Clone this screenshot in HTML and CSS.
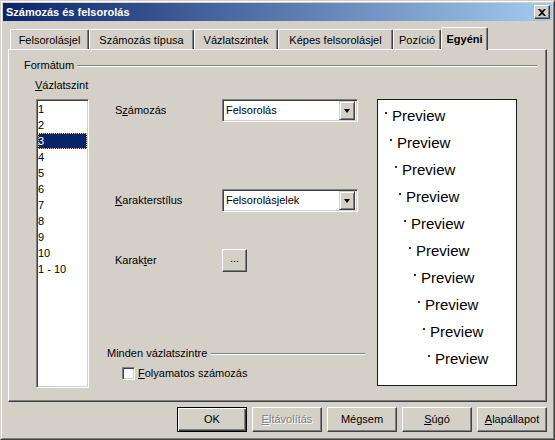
FILE: index.html
```html
<!DOCTYPE html>
<html lang="hu">
<head>
<meta charset="utf-8">
<title>Számozás és felsorolás</title>
<link rel="stylesheet" href="styles.css">
</head>
<body>
<div class="window">
  <div class="window-inner">
    <div class="titlebar">
      <span class="title">Számozás és felsorolás</span>
      <span class="close-btn"><svg width="8" height="7" viewBox="0 0 8 7"><path d="M0 0h2l2 2 2-2h2L5 3.5 8 7H6L4 5 2 7H0l3-3.5z" fill="#000"/></svg></span>
    </div>
    <div class="tabs">
      <div class="tab t1">Felsorolásjel</div>
      <div class="tab t2">Számozás típusa</div>
      <div class="tab t3">Vázlatszintek</div>
      <div class="tab t4">Képes felsorolásjel</div>
      <div class="tab t5">Pozíció</div>
      <div class="tab t6 active">Egyéni</div>
    </div>
    <div class="panel">
      <div class="group-head">
        <span>Formátum</span>
        <span class="etch"></span>
      </div>
      <div class="body">
        <div class="col-left">
          <div class="label"><u>V</u>ázlatszint</div>
          <div class="listbox">
            <div class="row">1</div>
            <div class="row">2</div>
            <div class="row selected">3</div>
            <div class="row">4</div>
            <div class="row">5</div>
            <div class="row">6</div>
            <div class="row">7</div>
            <div class="row">8</div>
            <div class="row">9</div>
            <div class="row">10</div>
            <div class="row">1 - 10</div>
          </div>
        </div>
        <div class="col-mid">
          <div class="field f1">
            <span class="flabel">S<u>z</u>ámozás</span>
            <div class="combo"><span class="ctext">Felsorolás</span><span class="dropbtn"><span class="arrow"></span></span></div>
          </div>
          <div class="field f2">
            <span class="flabel"><u>K</u>arakterstílus</span>
            <div class="combo"><span class="ctext">Felsorolásjelek</span><span class="dropbtn"><span class="arrow"></span></span></div>
          </div>
          <div class="field f3">
            <span class="flabel">Karak<u>t</u>er</span>
            <div class="smallbtn">...</div>
          </div>
          <div class="subhead">
            <span>Minden vázlatszintre</span>
            <span class="etch"></span>
          </div>
          <div class="checkrow">
            <span class="checkbox"></span>
            <span><u>F</u>olyamatos számozás</span>
          </div>
        </div>
        <div class="preview">
          <div class="prow"><span class="bullet"></span>Preview</div>
          <div class="prow"><span class="bullet"></span>Preview</div>
          <div class="prow"><span class="bullet"></span>Preview</div>
          <div class="prow"><span class="bullet"></span>Preview</div>
          <div class="prow"><span class="bullet"></span>Preview</div>
          <div class="prow"><span class="bullet"></span>Preview</div>
          <div class="prow"><span class="bullet"></span>Preview</div>
          <div class="prow"><span class="bullet"></span>Preview</div>
          <div class="prow"><span class="bullet"></span>Preview</div>
          <div class="prow"><span class="bullet"></span>Preview</div>
        </div>
      </div>
    </div>
    <div class="buttons">
      <div class="btn default">OK</div>
      <div class="btn disabled"><u>E</u>ltávolítás</div>
      <div class="btn">Mégsem</div>
      <div class="btn"><u>S</u>úgó</div>
      <div class="btn"><u>A</u>lapállapot</div>
    </div>
  </div>
</div>
</body>
</html>
```

FILE: styles.css
```css
* { box-sizing: border-box; }
html, body { margin: 0; padding: 0; background: #D4D0C8; }
body {
  font-family: "Liberation Sans", Arial, sans-serif;
  font-size: 11px;
  line-height: 13px;
  color: #000;
}
u { text-decoration: underline; text-underline-offset: 1px; }

.window {
  width: 555px;
  height: 440px;
  border: 1px solid;
  border-color: #D4D0C8 #404040 #404040 #D4D0C8;
  background: #D4D0C8;
}
.window-inner {
  height: 100%;
  border: 1px solid;
  border-color: #fff #808080 #808080 #fff;
  padding: 1px;
  display: flex;
  flex-direction: column;
}

.titlebar {
  height: 18px;
  background: linear-gradient(to right, #0A246A, #A6CAF0);
  display: flex;
  align-items: center;
  padding-left: 3px;
  padding-right: 2px;
}
.title {
  color: #fff;
  font-weight: bold;
  font-size: 11px;
  flex: 1;
}
.close-btn {
  width: 16px;
  height: 14px;
  background: #D4D0C8;
  border: 1px solid;
  border-color: #fff #404040 #404040 #fff;
  box-shadow: inset -1px -1px #808080;
  display: flex;
  align-items: center;
  justify-content: center;
  padding-right: 1px;
}

.tabs {
  display: flex;
  align-items: flex-end;
  margin-top: 6px;
  padding-left: 7px;
  height: 22px;
  position: relative;
  z-index: 1;
}
.tab {
  height: 20px;
  border-top: 1px solid #fff;
  border-left: 1px solid #fff;
  border-right: 1px solid #404040;
  box-shadow: inset -1px 0 #808080;
  border-radius: 2px 2px 0 0;
  text-align: center;
  padding-top: 4px;
  white-space: nowrap;
}
.t1 { width: 79px; }
.t2 { width: 105px; }
.t3 { width: 84px; }
.t4 { width: 115px; }
.t5 { width: 48px; }
.t6 { width: 47px; }
.tab.active {
  height: 23px;
  margin-bottom: -1px;
  padding-top: 5px;
  font-weight: bold;
  background: #D4D0C8;
}

.panel {
  margin: 0 5px;
  height: 353px;
  border: 1px solid;
  border-color: #fff #404040 #404040 #fff;
  box-shadow: inset -1px -1px #808080;
  padding: 9px 9px 0 15px;
}

.group-head {
  display: flex;
  align-items: center;
  height: 13px;
}
.etch {
  flex: 1;
  height: 2px;
  border-top: 1px solid #808080;
  border-bottom: 1px solid #fff;
  margin-left: 3px;
  margin-top: 1px;
}

.body {
  display: flex;
  margin-top: 7px;
  padding-left: 11px;
}
.col-left {
  width: 54px;
}
.listbox {
  margin-top: 7px;
  margin-left: 1px;
  width: 53px;
  height: 289px;
  background: #fff;
  border: 1px solid;
  border-color: #808080 #fff #fff #808080;
  box-shadow: inset 1px 1px #404040, inset -1px -1px #D4D0C8;
  padding: 1px;
}
.row {
  height: 16px;
  line-height: 16px;
  white-space: nowrap;
}
.row.selected {
  background: #0A246A;
  color: #fff;
  outline: 1px dotted #E6CF7A;
  outline-offset: -1px;
}

.col-mid {
  width: 258px;
  margin-left: 18px;
  padding-top: 20px;
  display: flex;
  flex-direction: column;
}
.field {
  display: flex;
  align-items: center;
  height: 23px;
}
.f2 { margin-top: 67px; }
.f3 { margin-top: 37px; }
.flabel {
  width: 115px;
  padding-left: 8px;
}
.combo {
  width: 136px;
  height: 23px;
  background: #fff;
  border: 1px solid;
  border-color: #808080 #fff #fff #808080;
  box-shadow: inset 1px 1px #404040, inset -1px -1px #D4D0C8;
  display: flex;
  align-items: center;
  padding: 2px 2px 2px 3px;
}
.ctext { flex: 1; }
.dropbtn {
  width: 16px;
  height: 19px;
  background: #D4D0C8;
  border: 1px solid;
  border-color: #D4D0C8 #404040 #404040 #D4D0C8;
  box-shadow: inset 1px 1px #fff, inset -1px -1px #808080;
  display: flex;
  align-items: center;
  justify-content: center;
}
.arrow {
  width: 0;
  height: 0;
  border-left: 3.5px solid transparent;
  border-right: 3.5px solid transparent;
  border-top: 4px solid #000;
}
.smallbtn {
  width: 25px;
  height: 23px;
  border: 1px solid;
  border-color: #fff #404040 #404040 #fff;
  box-shadow: inset -1px -1px #808080;
  text-align: center;
  line-height: 17px;
}

.subhead {
  display: flex;
  align-items: center;
  height: 13px;
  margin-top: 75px;
}
.subhead .etch { margin-left: 4px; }
.checkrow {
  display: flex;
  align-items: center;
  margin-top: 7px;
  padding-left: 15px;
  height: 13px;
}
.checkbox {
  width: 13px;
  height: 13px;
  background: #fff;
  border: 1px solid;
  border-color: #808080 #fff #fff #808080;
  box-shadow: inset 1px 1px #404040, inset -1px -1px #D4D0C8;
  margin-right: 3px;
}

.preview {
  width: 140px;
  height: 287px;
  margin-left: 12px;
  margin-top: 20px;
  background: #fff;
  border: 1px solid #1a1a1a;
  padding-top: 2px;
  font-size: 15px;
  line-height: 27px;
}
.prow { white-space: nowrap; height: 27px; }
.bullet {
  display: inline-block;
  width: 2px;
  height: 2px;
  background: #333;
  vertical-align: 7px;
  margin-right: 5px;
}
.prow:nth-child(1) { padding-left: 7px; }
.prow:nth-child(2) { padding-left: 12px; }
.prow:nth-child(3) { padding-left: 17px; }
.prow:nth-child(4) { padding-left: 21px; }
.prow:nth-child(5) { padding-left: 26px; }
.prow:nth-child(6) { padding-left: 31px; }
.prow:nth-child(7) { padding-left: 36px; }
.prow:nth-child(8) { padding-left: 40px; }
.prow:nth-child(9) { padding-left: 45px; }
.prow:nth-child(10) { padding-left: 50px; }

.buttons {
  display: flex;
  justify-content: flex-end;
  gap: 5px;
  margin-top: 5px;
  padding-right: 5px;
}
.btn {
  width: 70px;
  height: 25px;
  border: 1px solid;
  border-color: #fff #404040 #404040 #fff;
  box-shadow: inset -1px -1px #808080;
  display: flex;
  align-items: center;
  justify-content: center;
}
.btn.default {
  border-color: #000;
  box-shadow: inset 1px 1px #fff, inset -1px -1px #404040, inset -2px -2px #808080;
}
.btn.disabled {
  color: #808080;
  text-shadow: 1px 1px 0 #fff;
}
```
